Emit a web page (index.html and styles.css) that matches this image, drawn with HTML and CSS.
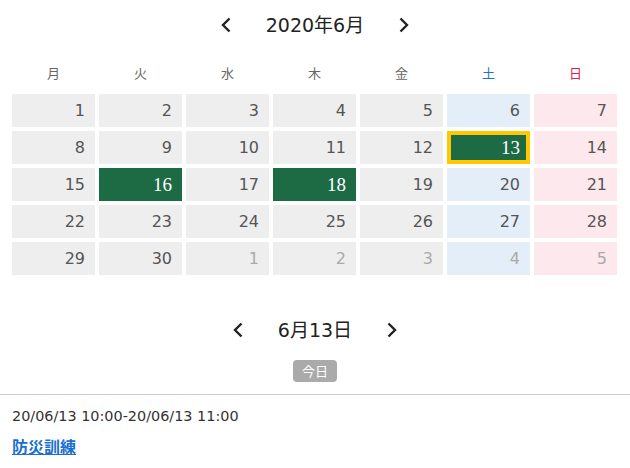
FILE: index.html
```html
<!DOCTYPE html>
<html lang="ja">
<head>
<meta charset="utf-8">
<link rel="stylesheet" href="styles.css">
</head>
<body>
<div class="nav nav-month">
  <svg class="chev" width="10" height="16" viewBox="0 0 10 16"><polyline points="8.5,1.5 2,8 8.5,14.5" /></svg>
  <span class="nav-title">2020年6月</span>
  <svg class="chev" width="10" height="16" viewBox="0 0 10 16"><polyline points="1.5,1.5 8,8 1.5,14.5" /></svg>
</div>
<div class="weekdays">
  <div>月</div><div>火</div><div>水</div><div>木</div><div>金</div><div class="sat">土</div><div class="sun">日</div>
</div>
<div class="grid">
  <div class="cell">1</div><div class="cell">2</div><div class="cell">3</div><div class="cell">4</div><div class="cell">5</div><div class="cell sat">6</div><div class="cell sun">7</div>
  <div class="cell">8</div><div class="cell">9</div><div class="cell">10</div><div class="cell">11</div><div class="cell">12</div><div class="cell sel today">13</div><div class="cell sun">14</div>
  <div class="cell">15</div><div class="cell sel">16</div><div class="cell">17</div><div class="cell sel">18</div><div class="cell">19</div><div class="cell sat">20</div><div class="cell sun">21</div>
  <div class="cell">22</div><div class="cell">23</div><div class="cell">24</div><div class="cell">25</div><div class="cell">26</div><div class="cell sat">27</div><div class="cell sun">28</div>
  <div class="cell">29</div><div class="cell">30</div><div class="cell other">1</div><div class="cell other">2</div><div class="cell other">3</div><div class="cell sat other">4</div><div class="cell sun other">5</div>
</div>
<div class="nav nav-day">
  <svg class="chev" width="10" height="16" viewBox="0 0 10 16"><polyline points="8.5,1.5 2,8 8.5,14.5" /></svg>
  <span class="nav-title">6月13日</span>
  <svg class="chev" width="10" height="16" viewBox="0 0 10 16"><polyline points="1.5,1.5 8,8 1.5,14.5" /></svg>
</div>
<div class="badge-row"><span class="badge">今日</span></div>
<div class="events">
  <div class="event-time">20/06/13 10:00-20/06/13 11:00</div>
  <a class="event-title" href="#">防災訓練</a>
</div>
</body>
</html>
```
FILE: styles.css
```css
html, body {
  margin: 0;
  padding: 0;
  background: #fff;
}
body {
  font-family: "DejaVu Sans", "Noto Sans CJK JP", sans-serif;
  color: #333;
  width: 630px;
}
.nav {
  display: flex;
  justify-content: center;
  align-items: center;
  gap: 35px;
  color: #222;
}
.nav-month {
  height: 50px;
}
.nav-title {
  font-size: 19px;
  line-height: 24px;
}
.chev polyline {
  fill: none;
  stroke: #222;
  stroke-width: 2.4;
  stroke-linecap: butt;
  stroke-linejoin: miter;
}
.weekdays {
  display: grid;
  grid-template-columns: repeat(7, 1fr);
  column-gap: 4px;
  margin: 0 13px 0 12px;
  height: 44px;
  align-items: center;
  text-align: center;
  font-size: 13px;
  color: #666;
  font-family: "Noto Sans CJK JP", sans-serif;
}
.weekdays .sat { color: #1a72cc; }
.weekdays .sun { color: #e3224a; }
.grid {
  display: grid;
  grid-template-columns: repeat(7, 1fr);
  grid-auto-rows: 33px;
  gap: 4px;
  margin: 0 13px 0 12px;
}
.cell {
  background: #eeeeee;
  color: #555;
  font-size: 16px;
  line-height: 33px;
  text-align: right;
  padding-right: 10px;
  box-sizing: border-box;
}
.cell.sat { background: #e4eef8; }
.cell.sun { background: #fde8ee; }
.cell.other { color: #aaa; }
.cell.sel {
  background: #1d6b45;
  color: #fff;
  font-family: "Liberation Serif", serif;
  font-weight: normal;
  font-size: 19px;
}
.cell.today {
  border: 4px solid #ffc800;
  line-height: 25px;
  padding-right: 6px;
}
.nav-day {
  margin-top: 40px;
  height: 30px;
}
.badge-row {
  display: flex;
  justify-content: center;
  margin-top: 15px;
}
.badge {
  background: #aaa;
  color: #fff;
  font-size: 13px;
  line-height: 22px;
  width: 44px;
  text-align: center;
  border-radius: 4px;
  font-family: "Noto Sans CJK JP", sans-serif;
}
.events {
  margin-top: 12px;
  border-top: 1px solid #ccc;
  padding: 11px 12px 0;
}
.event-time {
  font-size: 14.4px;
  line-height: 20px;
  color: #333;
}
.event-title {
  display: inline-block;
  margin-top: 10px;
  font-size: 16px;
  line-height: 20px;
  font-weight: bold;
  color: #1a6fd0;
  text-decoration: underline;
  font-family: "Noto Sans CJK JP", sans-serif;
}
```
